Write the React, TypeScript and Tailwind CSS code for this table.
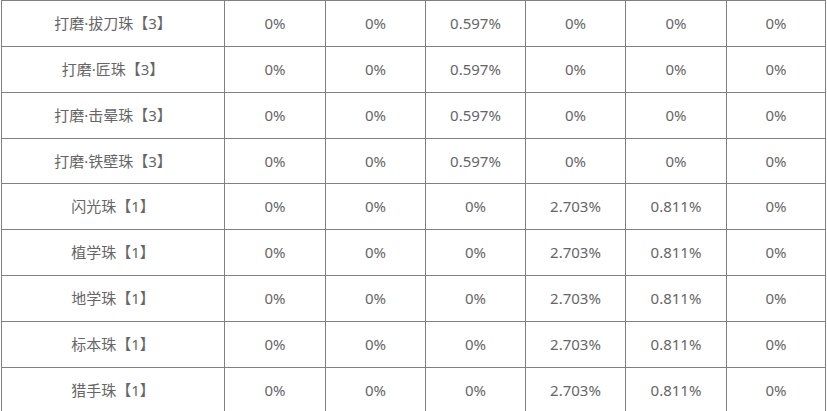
const rows = [
  ["打磨·拔刀珠【3】", "0%", "0%", "0.597%", "0%", "0%", "0%"],
  ["打磨·匠珠【3】", "0%", "0%", "0.597%", "0%", "0%", "0%"],
  ["打磨·击晕珠【3】", "0%", "0%", "0.597%", "0%", "0%", "0%"],
  ["打磨·铁壁珠【3】", "0%", "0%", "0.597%", "0%", "0%", "0%"],
  ["闪光珠【1】", "0%", "0%", "0%", "2.703%", "0.811%", "0%"],
  ["植学珠【1】", "0%", "0%", "0%", "2.703%", "0.811%", "0%"],
  ["地学珠【1】", "0%", "0%", "0%", "2.703%", "0.811%", "0%"],
  ["标本珠【1】", "0%", "0%", "0%", "2.703%", "0.811%", "0%"],
  ["猎手珠【1】", "0%", "0%", "0%", "2.703%", "0.811%", "0%"],
]

const colWidths = ["w-[223px]", "w-[101px]", "w-[100px]", "w-[100px]", "w-[100px]", "w-[101px]", "w-[99px]"]

export default function App() {
  return (
    <div className="h-[411px] w-[827px] overflow-hidden bg-white font-['Noto_Sans','Noto_Sans_CJK_SC',sans-serif] text-[15px] text-[#666]">
      <div className="ml-px inline-flex flex-col border-l border-t border-[#808080]">
        {rows.map((row, r) => (
          <div key={r} className={`flex ${r === 3 ? "h-[45px]" : "h-[46px]"}`}>
            {row.map((cell, c) => (
              <div
                key={c}
                className={`${colWidths[c]} flex items-center justify-center border-r border-b border-[#808080]`}
              >
                {cell}
              </div>
            ))}
          </div>
        ))}
      </div>
    </div>
  )
}
